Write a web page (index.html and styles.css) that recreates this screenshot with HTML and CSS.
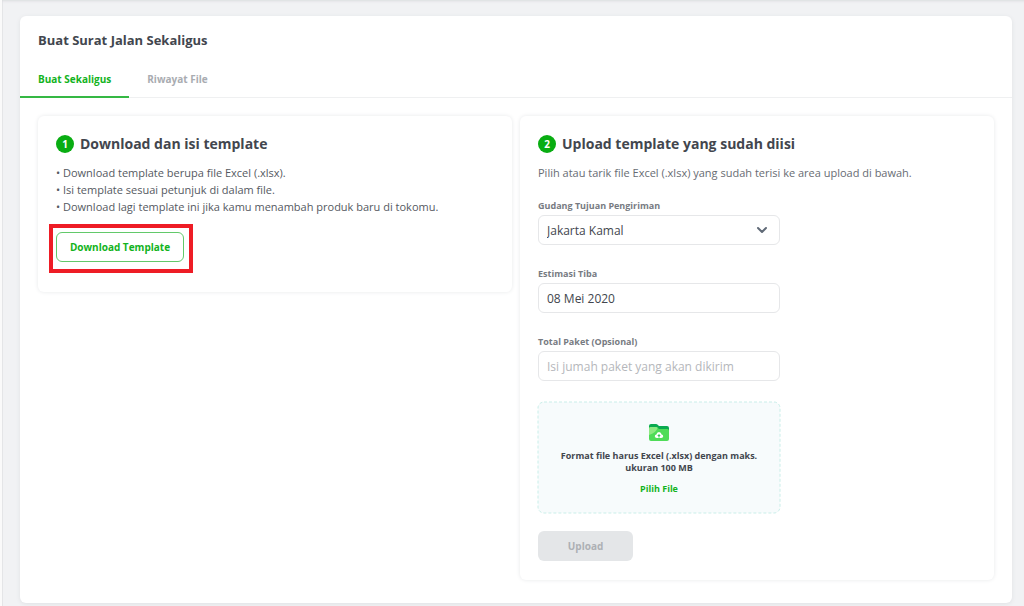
FILE: index.html
```html
<!DOCTYPE html>
<html lang="id">
<head>
<meta charset="utf-8">
<meta name="viewport" content="width=device-width, initial-scale=1">
<title>Buat Surat Jalan Sekaligus</title>
<link rel="stylesheet" href="styles.css">
</head>
<body class="page">
<main class="sheet">
  <h1 class="title">Buat Surat Jalan Sekaligus</h1>
  <nav class="tabs">
    <a class="tab tab-active" href="#sekaligus" aria-current="page">Buat Sekaligus</a>
    <a class="tab" href="#riwayat">Riwayat File</a>
  </nav>
  <div class="steps">
    <section class="panel">
      <h2 class="heading"><span class="number">1</span>Download dan isi template</h2>
      <ul class="notes">
        <li>Download template berupa file Excel (.xlsx).</li>
        <li>Isi template sesuai petunjuk di dalam file.</li>
        <li>Download lagi template ini jika kamu menambah produk baru di tokomu.</li>
      </ul>
      <div class="highlight"><button class="button outline" type="button">Download Template</button></div>
    </section>
    <section class="panel">
      <h2 class="heading"><span class="number">2</span>Upload template yang sudah diisi</h2>
      <p class="intro">Pilih atau tarik file Excel (.xlsx) yang sudah terisi ke area upload di bawah.</p>
      <form class="form">
        <div class="field">
          <label class="label" for="gudang">Gudang Tujuan Pengiriman</label>
          <div class="select-wrap">
            <select class="control" id="gudang"><option>Jakarta Kamal</option></select>
            <svg class="chevron" viewBox="0 0 12 8" aria-hidden="true"><path d="M2 2l4 4 4-4" fill="none" stroke="#606a77" stroke-width="2" stroke-linecap="round" stroke-linejoin="round"/></svg>
          </div>
        </div>
        <div class="field">
          <label class="label" for="tiba">Estimasi Tiba</label>
          <input class="control" id="tiba" type="text" value="08 Mei 2020">
        </div>
        <div class="field">
          <label class="label" for="paket">Total Paket (Opsional)</label>
          <input class="control" id="paket" type="text" placeholder="Isi jumah paket yang akan dikirim">
        </div>
        <div class="dropzone">
          <svg class="frame" aria-hidden="true"><rect class="frame-line" width="100%" height="100%" rx="6"/></svg>
          <svg class="folder" viewBox="0 0 20 17" aria-hidden="true">
            <path d="M0 2Q0 0 2 0h5q1 0 1.700.8L10 2h8q2 0 2 2v7H0z" fill="#0aaa50"/>
            <path d="M0 4.500Q0 3 1.500 3H7q1 0 1.700.8L10 5h8.500Q20 5 20 6.500V15q0 2-2 2H2q-2 0-2-2z" fill="#4fdc58"/>
            <path d="M0 4.500Q0 3 1.500 3H7q1 0 1.700.8Q7 9 0 11z" fill="#8ee982"/>
            <path d="M7.800 14q-2 0-2-1.700 0-1.500 1.600-1.800Q7.800 8 10 8t2.600 2.500q1.600.3 1.600 1.800 0 1.700-2 1.700z" fill="#fff"/>
            <path d="M10 10l1.800 2h-1.200v1.500H9.400V12H8.200z" fill="#38c957"/>
          </svg>
          <p class="format">Format file harus Excel (.xlsx) dengan maks. ukuran 100 MB</p>
          <button class="pick" type="button">Pilih File</button>
        </div>
        <button class="button upload" type="submit" disabled>Upload</button>
      </form>
    </section>
  </div>
</main>
</body>
</html>
```
FILE: styles.css
```css
* {
  box-sizing: border-box;
}

.page {
  margin: 0;
  padding: 16px 12px 3px 18px;
  border-left: 2px solid #fafafa;
  background: #f1f2f4;
  box-shadow: inset 0 3px 3px -2px #d9dbde, inset 1px 0 #e5e6e8;
  color: #42464e;
  font-family: "Open Sans", "Noto Sans", sans-serif;
}

.sheet {
  padding-bottom: 23px;
  border-radius: 6px;
  background: #fff;
  box-shadow: 0 1px 4px #dfe1e4;
}

.title {
  margin: 0;
  padding: 14px 18px 0;
  font-size: 13px;
  line-height: 20px;
}

.tabs {
  display: flex;
  margin-top: 12px;
  border-bottom: 1px solid #eff0f1;
}

.tab {
  margin-bottom: -1px;
  padding: 8px 18px;
  border-bottom: 2px solid transparent;
  color: #a9acb1;
  font-size: 10px;
  font-weight: 700;
  line-height: 18px;
  text-decoration: none;
}

.tab-active {
  border-color: #35b844;
  color: #12b31d;
}

.steps {
  display: grid;
  grid-template-columns: 1fr 1fr;
  align-items: start;
  gap: 8px;
  padding: 18px 18px 0;
}

.panel {
  padding: 16px 18px 19px;
  border-radius: 6px;
  box-shadow: 0 0 4px #e7e8ea;
}

.heading {
  display: flex;
  align-items: center;
  gap: 6px;
  margin: 0;
  font-size: 14px;
  line-height: 24px;
}

.number {
  display: grid;
  place-items: center;
  width: 18px;
  height: 18px;
  border-radius: 50%;
  background: #09ad12;
  color: #fff;
  font-size: 10px;
  line-height: 18px;
}

.notes {
  margin: 8px 0 0;
  padding: 0;
  list-style: none;
  color: #555961;
  font-size: 11px;
  line-height: 17px;
}

.notes li::before {
  content: "• ";
}

.highlight {
  width: fit-content;
  margin: 9px -7px 0;
  padding: 4px 5px 7px 3px;
  border: 4px solid #ee1c25;
}

.button {
  display: block;
  height: 30px;
  border: 0;
  border-radius: 6px;
  font: 700 10px "Open Sans", "Noto Sans", sans-serif;
}

.outline {
  min-width: 128px;
  padding: 0 8px;
  border: 1px solid #62c96a;
  background: #fff;
  color: #12b31d;
}

.intro {
  margin: 8px 0 0;
  color: #686c73;
  font-size: 11px;
  line-height: 17px;
}

.form {
  max-width: 242px;
  margin-top: 17px;
}

.field {
  margin-bottom: 21px;
}

.label {
  display: block;
  margin-bottom: 1px;
  color: #777b82;
  font-size: 9px;
  font-weight: 700;
  line-height: 16px;
}

.select-wrap {
  position: relative;
}

.control {
  display: block;
  width: 100%;
  height: 30px;
  padding: 0 8px;
  border: 1px solid #e6e7e9;
  border-radius: 6px;
  appearance: none;
  background: #fff;
  color: #42464e;
  font: 12px "Open Sans", "Noto Sans", sans-serif;
}

.control::placeholder {
  color: #b5b7bb;
}

.chevron {
  position: absolute;
  top: 11px;
  right: 12px;
  width: 12px;
  height: 8px;
  pointer-events: none;
}

.dropzone {
  position: relative;
  display: flex;
  flex-direction: column;
  align-items: center;
  padding: 22px 18px 17px;
  border-radius: 6px;
  background: #f7fbfc;
}

.frame {
  position: absolute;
  inset: 0;
  width: 100%;
  height: 100%;
  overflow: visible;
  pointer-events: none;
}

.frame-line {
  fill: none;
  stroke: #c9eee9;
  stroke-dasharray: 3 2;
}

.folder {
  width: 20px;
  height: 17px;
}

.format {
  margin: 9px 0 0;
  font-size: 9px;
  font-weight: 700;
  line-height: 12px;
  text-align: center;
}

.pick {
  margin-top: 8px;
  padding: 0;
  border: 0;
  background: none;
  color: #12b31d;
  font: 700 9px/14px "Open Sans", "Noto Sans", sans-serif;
}

.upload {
  width: 95px;
  margin-top: 18px;
  background: #e4e6e8;
  color: #adb0b4;
}
```
